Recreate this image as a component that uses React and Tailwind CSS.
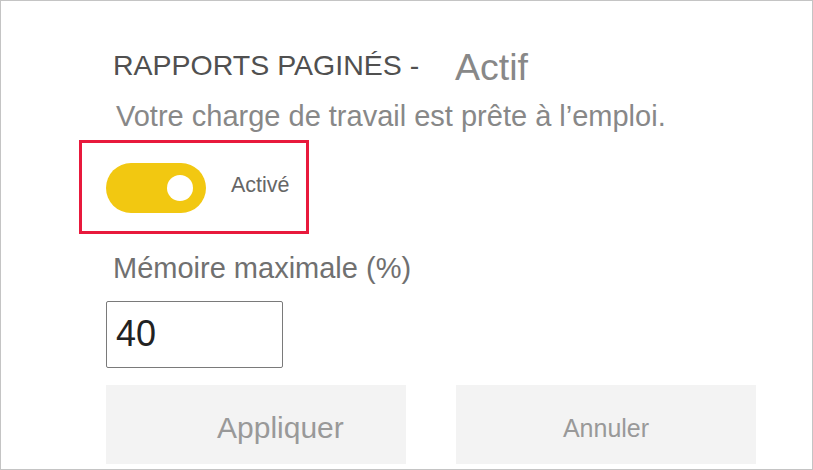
import React, { useState } from 'react';

const Toggle = ({ on, onChange }) => (
  <button
    onClick={() => onChange(!on)}
    className={`flex h-[50px] w-[100px] items-center rounded-full px-[13px] ${on ? 'justify-end bg-[#f2c811]' : 'justify-start bg-[#c8c8c8]'}`}
  >
    <span className="block h-[26px] w-[26px] rounded-full bg-white" />
  </button>
);

export default function App() {
  const [enabled, setEnabled] = useState(true);
  const [memory, setMemory] = useState('40');

  return (
    <div className="h-[470px] w-[813px] border border-[#c4c4c4] bg-white font-['Liberation_Sans',Arial,sans-serif]">
      <div className="flex flex-col items-start pl-[105px] pt-[48px]">
        {/* Workload title + status */}
        <div className="flex items-start">
          <span className="mt-[2px] w-[349px] pl-[7px] text-[28.5px] leading-none text-[#505050]">RAPPORTS PAGINÉS -</span>
          <span className="text-[37.5px] leading-none text-[#888]">Actif</span>
        </div>
        <p className="mt-[15px] pl-[10px] text-[29px] leading-none text-[#888]">
          Votre charge de travail est prête à l’emploi.
        </p>

        {/* Highlighted switch */}
        <div className="-ml-[27px] mt-[9px] flex h-[94px] w-[230px] items-center border-[3px] border-[#e8193c] pl-[24px] pt-[2px]">
          <Toggle on={enabled} onChange={setEnabled} />
          <span className="ml-[25px] -mt-[3px] text-[21.5px] leading-none text-[#666]">{enabled ? 'Activé' : 'Désactivé'}</span>
        </div>

        <label htmlFor="mem" className="mt-[20px] pl-[7px] text-[29px] leading-none text-[#707070]">
          Mémoire maximale (%)
        </label>
        <input
          id="mem"
          value={memory}
          onChange={(e) => setMemory(e.target.value)}
          className="mt-[18px] h-[67px] w-[177px] rounded-[2px] border border-[#7a7a7a] pl-[9px] text-[36px] text-[#222] outline-none"
        />

        {/* Actions */}
        <div className="mt-[17px] flex gap-[50px]">
          <button className="flex h-[79px] w-[300px] items-center bg-[#f3f3f3] pl-[111px] pt-[8px] text-[30px] leading-none text-[#999]">
            Appliquer
          </button>
          <button className="flex h-[79px] w-[300px] items-center justify-center bg-[#f3f3f3] pt-[8px] text-[25px] leading-none text-[#999]">
            Annuler
          </button>
        </div>
      </div>
    </div>
  );
}
